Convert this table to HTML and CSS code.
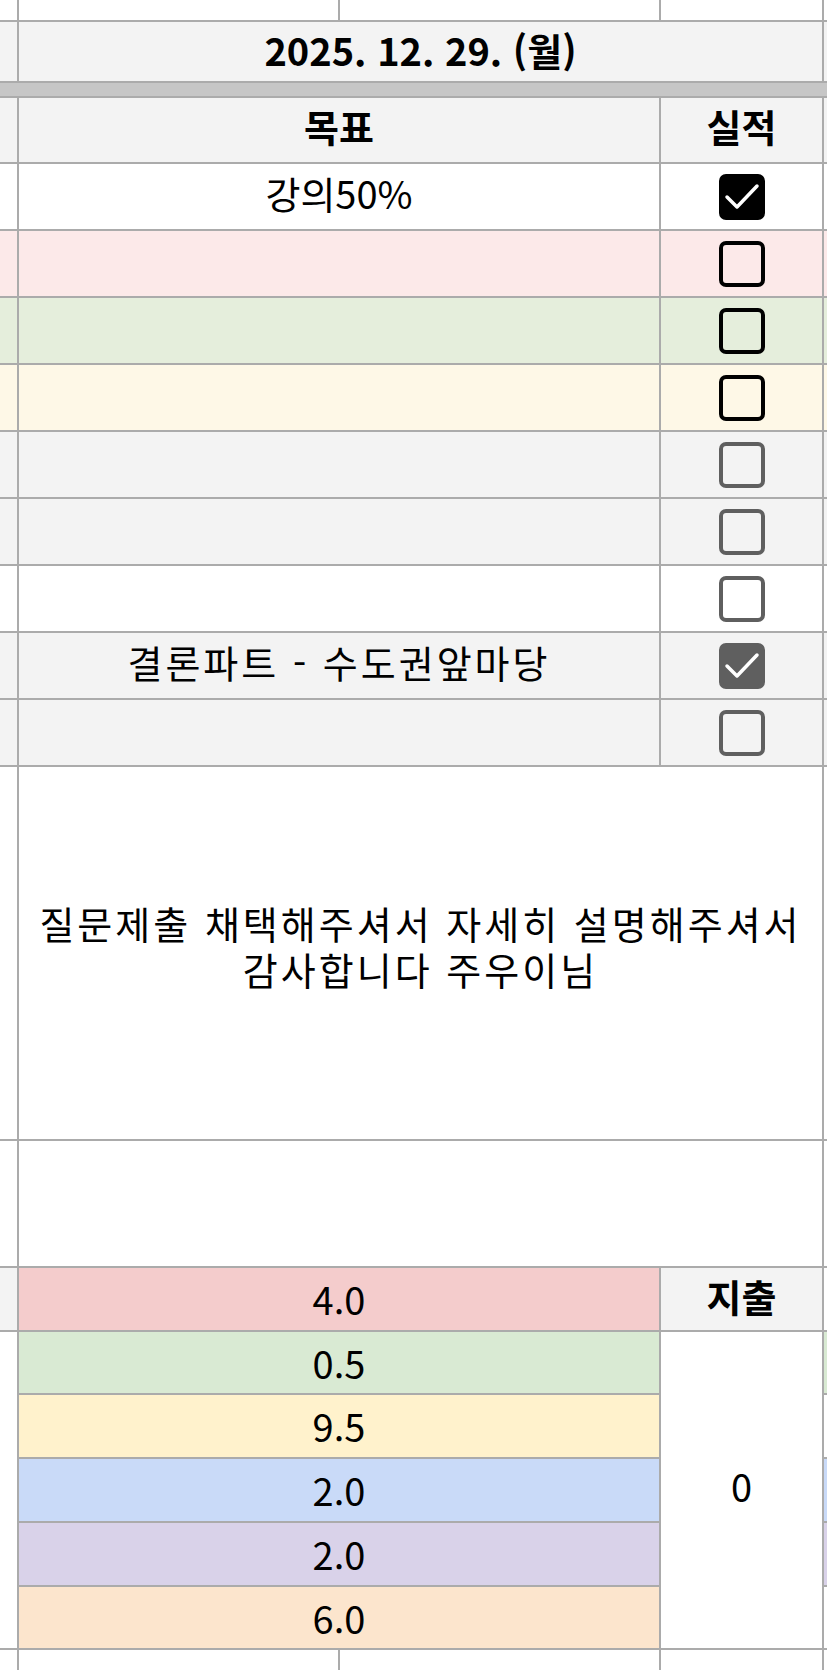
FILE: index.html
```html
<!DOCTYPE html>
<html lang="ko">
<head>
<meta charset="utf-8">
<title>2025. 12. 29.</title>
<link rel="stylesheet" href="styles.css">
</head>
<body>
<div class="sheet">
  <!-- top partial row -->
  <div class="c white"></div><div class="c white"></div><div class="c white"></div><div class="c white"></div><div class="c white"></div>

  <!-- date row -->
  <div class="c gray"></div>
  <div class="c gray span3 bold date">2025. 12. 29. (월)</div>
  <div class="c gray"></div>

  <!-- frozen divider -->
  <div class="band"></div>

  <!-- header -->
  <div class="c gray"></div>
  <div class="c gray span2 bold head">목표</div>
  <div class="c gray bold head">실적</div>
  <div class="c gray"></div>

  <!-- goal rows -->
  <div class="c white"></div>
  <div class="c white span2 goal">강의50%</div>
  <div class="c white"><span class="cb on"><svg viewBox="0 0 46 46"><path d="M8 23 L18 33 L38 12"/></svg></span></div>
  <div class="c white"></div>

  <div class="c pink"></div>
  <div class="c pink span2"></div>
  <div class="c pink"><span class="cb"></span></div>
  <div class="c pink"></div>

  <div class="c green"></div>
  <div class="c green span2"></div>
  <div class="c green"><span class="cb"></span></div>
  <div class="c green"></div>

  <div class="c yellow"></div>
  <div class="c yellow span2"></div>
  <div class="c yellow"><span class="cb"></span></div>
  <div class="c yellow"></div>

  <div class="c gray"></div>
  <div class="c gray span2"></div>
  <div class="c gray"><span class="cb dim"></span></div>
  <div class="c gray"></div>

  <div class="c gray"></div>
  <div class="c gray span2"></div>
  <div class="c gray"><span class="cb dim"></span></div>
  <div class="c gray"></div>

  <div class="c white"></div>
  <div class="c white span2"></div>
  <div class="c white"><span class="cb dim"></span></div>
  <div class="c white"></div>

  <div class="c gray"></div>
  <div class="c gray span2 goal wide">결론파트 - 수도권앞마당</div>
  <div class="c gray"><span class="cb dim on"><svg viewBox="0 0 46 46"><path d="M8 23 L18 33 L38 12"/></svg></span></div>
  <div class="c gray"></div>

  <div class="c gray"></div>
  <div class="c gray span2"></div>
  <div class="c gray"><span class="cb dim"></span></div>
  <div class="c gray"></div>

  <!-- memo -->
  <div class="c white"></div>
  <div class="c white span3 memo wide">질문제출 채택해주셔서 자세히 설명해주셔서 감사합니다 주우이님</div>
  <div class="c white"></div>

  <div class="c white"></div>
  <div class="c white span3"></div>
  <div class="c white"></div>

  <!-- totals -->
  <div class="c gray"></div>
  <div class="c t-red span2">4.0</div>
  <div class="c gray bold spend">지출</div>
  <div class="c white"></div>

  <div class="c white rspan5"></div>
  <div class="c t-green span2">0.5</div>
  <div class="c white rspan5 zero">0</div>
  <div class="c t-green"></div>

  <div class="c t-yellow span2">9.5</div>
  <div class="c white"></div>

  <div class="c t-blue span2">2.0</div>
  <div class="c t-blue"></div>

  <div class="c t-purple span2">2.0</div>
  <div class="c t-purple"></div>

  <div class="c t-orange span2">6.0</div>
  <div class="c white"></div>

  <!-- bottom partial row -->
  <div class="c white"></div><div class="c white"></div><div class="c white"></div><div class="c white"></div><div class="c white"></div>
</div>
</body>
</html>
```

FILE: styles.css
```css
html, body {
  margin: 0;
  padding: 0;
  background: #ffffff;
  overflow: hidden;
}

.sheet {
  width: 827px;
  height: 1670px;
  display: grid;
  grid-template-columns: 17px 319px 319px 161px 3px;
  grid-template-rows: 20px 59px 13px 64px repeat(9, 65px) 372px 125px 62px 61px 62px 62px 62px 61px 20px;
  gap: 2px;
  background: #ababab;
  font-family: "Noto Sans CJK KR", "Noto Sans", sans-serif;
  font-size: 38px;
  color: #000;
}

.c {
  display: flex;
  align-items: center;
  justify-content: center;
  text-align: center;
  overflow: hidden;
  white-space: nowrap;
  box-sizing: border-box;
  line-height: 1.1;
}

.span2 { grid-column: span 2; }
.span3 { grid-column: span 3; }
.rspan5 { grid-row: span 5; }

.bold { font-weight: 700; }
.date { padding-bottom: 4px; }
.head { padding-bottom: 8px; }
.spend { padding-bottom: 6px; }
.goal { padding-bottom: 8px; }
.zero { padding-bottom: 8px; }
.wide { letter-spacing: 3px; }

.band {
  grid-column: 1 / -1;
  background: #c6c6c6;
}

.white { background: #ffffff; }
.gray { background: #f3f3f3; }
.pink { background: #fce9e9; }
.green { background: #e5eedc; }
.yellow { background: #fef8e7; }

.t-red { background: #f4cccc; }
.t-green { background: #d9ead3; }
.t-yellow { background: #fff2cc; }
.t-blue { background: #c9daf8; }
.t-purple { background: #d9d2e9; }
.t-orange { background: #fce5cd; }

.memo {
  white-space: normal;
  word-break: keep-all;
  line-height: 46px;
  padding: 0 8px 14px;
}

.cb {
  box-sizing: border-box;
  width: 46px;
  height: 46px;
  border: 4px solid #000;
  border-radius: 7px;
  display: flex;
  align-items: center;
  justify-content: center;
}

.cb.dim { border-color: #5f5f5f; }

.cb.on { background: #000; border-color: #000; }
.cb.dim.on { background: #5f5f5f; border-color: #5f5f5f; }

.cb svg {
  width: 46px;
  height: 46px;
  flex: none;
}

.cb svg path {
  fill: none;
  stroke: #ffffff;
  stroke-width: 3.5;
  stroke-linecap: round;
  stroke-linejoin: round;
}
```
